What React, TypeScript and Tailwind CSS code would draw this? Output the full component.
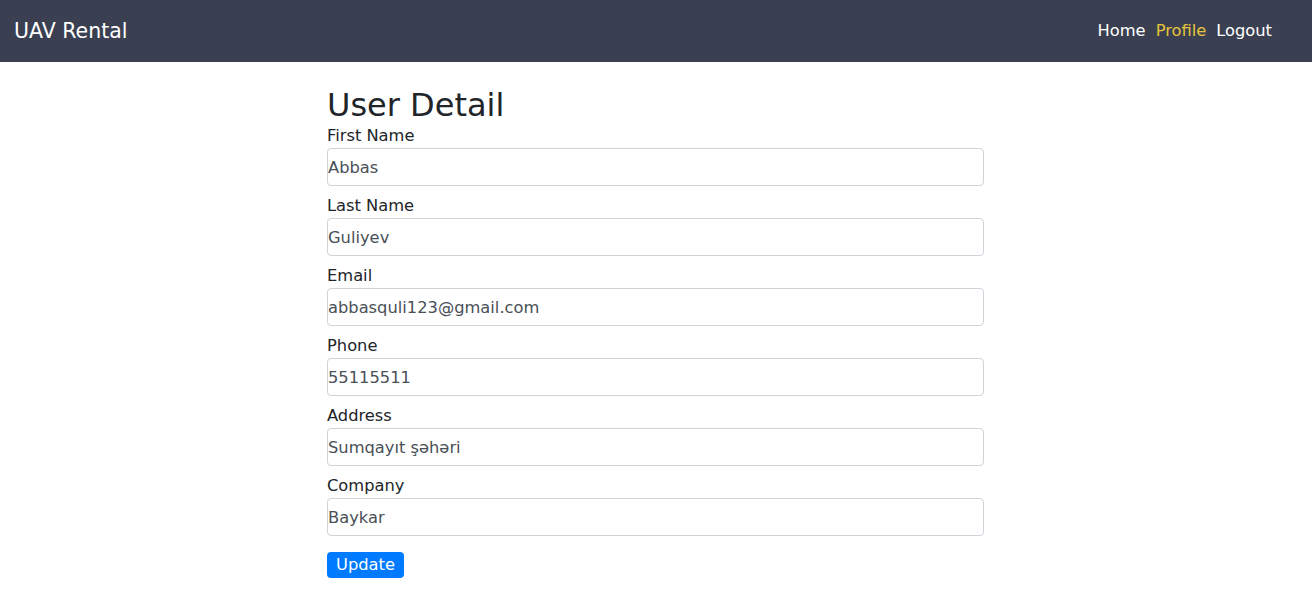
import React from "react";

const fields = [
  { label: "First Name", value: "Abbas" },
  { label: "Last Name", value: "Guliyev" },
  { label: "Email", value: "abbasquli123@gmail.com" },
  { label: "Phone", value: "55115511" },
  { label: "Address", value: "Sumqayıt şəhəri" },
  { label: "Company", value: "Baykar" },
];

export default function App() {
  return (
    <div className="min-h-[599px] bg-white" style={{ fontFamily: '"DejaVu Sans", sans-serif' }}>
      <nav className="h-[62px] bg-[#3a4052] flex items-center justify-between pl-[14px] pr-[40px]">
        <span className="text-[20.5px] text-white leading-none">UAV Rental</span>
        <div className="flex items-center gap-[10px] text-[16.3px]">
          <a className="text-white">Home</a>
          <a className="text-[#e6c43a]">Profile</a>
          <a className="text-white">Logout</a>
        </div>
      </nav>
      <div className="w-[658px] mx-auto pr-px">
        <h1 className="mt-[24px] text-[32px] leading-[1.2] text-[#212529]">User Detail</h1>
        {fields.map((f) => (
          <div key={f.label} className="mb-2">
            <label className="block text-[16.3px] leading-6 text-[#212529]">{f.label}</label>
            <input
              readOnly
              value={f.value}
              className="block w-full h-[38px] border border-[#ced4da] rounded-[4px] text-[16.3px] text-[#495057] px-0 outline-none"
              style={{ fontFamily: '"DejaVu Sans", sans-serif' }}
            />
          </div>
        ))}
        <button className="mt-2 h-[26px] px-[9px] bg-[#007bff] text-white text-[16.3px] rounded-[4px] leading-none">
          Update
        </button>
      </div>
    </div>
  );
}
